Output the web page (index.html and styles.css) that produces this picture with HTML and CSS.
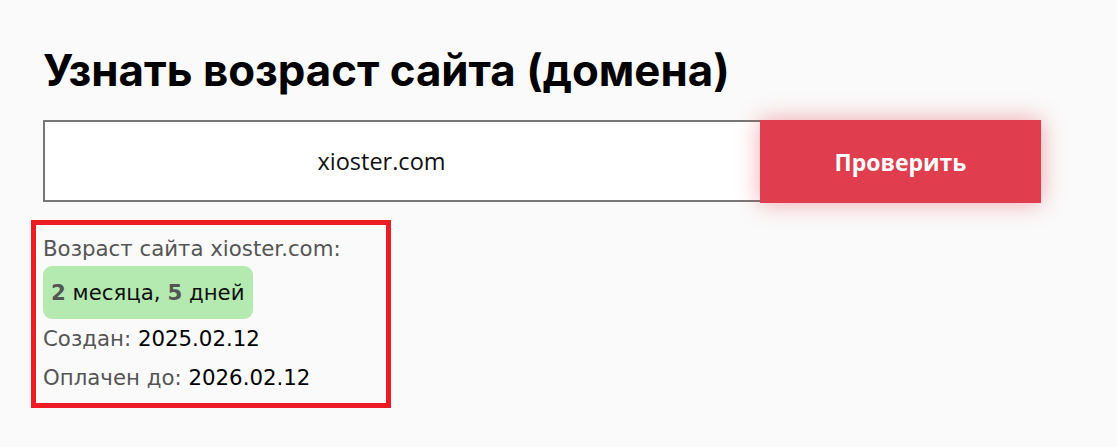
FILE: index.html
```html
<!DOCTYPE html>
<html lang="ru">
<head>
<meta charset="utf-8">
<title>Узнать возраст сайта</title>
<link rel="stylesheet" href="styles.css">
</head>
<body>
<main class="page">
  <h1 class="title">Узнать возраст сайта (домена)</h1>
  <form class="check-form">
    <input class="domain-input" type="text" value="xioster.com">
    <button class="check-btn" type="button">Проверить</button>
  </form>
  <section class="result">
    <div class="row label">Возраст сайта xioster.com:</div>
    <div class="age"><b>2</b> месяца, <b>5</b> дней</div>
    <div class="row"><span class="label">Создан:</span> <span class="value">2025.02.12</span></div>
    <div class="row"><span class="label">Оплачен до:</span> <span class="value">2026.02.12</span></div>
  </section>
</main>
</body>
</html>
```
FILE: styles.css
```css
html, body {
  margin: 0;
  padding: 0;
  background: #fafafa;
}
body {
  font-family: "Inter", "DejaVu Sans", sans-serif;
  color: #000;
}
.page {
  padding: 47px 0 0 43px;
}
.title {
  margin: 0;
  font-size: 43.8px;
  line-height: 48px;
  font-weight: 700;
  color: #000;
  letter-spacing: 0;
}
.check-form {
  display: flex;
  margin-top: 25px;
  width: 998px;
  height: 82px;
}
.domain-input {
  box-sizing: border-box;
  width: 717px;
  height: 82px;
  border: 2px solid #777;
  border-right: none;
  background: #fff;
  margin: 0;
  padding: 0 42px 0 0;
  text-align: center;
  font-family: "Open Sans", sans-serif;
  font-size: 23.5px;
  color: #111;
  outline: none;
}
.check-btn {
  width: 281px;
  height: 83px;
  margin: 0;
  border: none;
  background: #e03e4e;
  color: #fff;
  font-family: "Open Sans", sans-serif;
  font-weight: 700;
  font-size: 23px;
  box-shadow: 0 0 22px rgba(230, 60, 75, 0.45);
}
.result {
  display: inline-flex;
  flex-direction: column;
  align-items: flex-start;
  margin: 18px 0 0 -12px;
  border: 5px solid #ed1c24;
  padding: 9px 20px 6px 7px;
  font-family: "DejaVu Sans", sans-serif;
  font-size: 21.3px;
  box-sizing: border-box;
  width: 360px;
}
.row {
  line-height: 39px;
}
.row:first-child {
  line-height: 30px;
}
.label {
  color: #555;
}
.value {
  color: #000;
}
.age {
  background: #b4eab0;
  border-radius: 9px;
  padding: 0 8px;
  line-height: 53px;
  margin: 2px 0 0 0;
  color: #111;
}
.age b {
  color: #555;
}
```
